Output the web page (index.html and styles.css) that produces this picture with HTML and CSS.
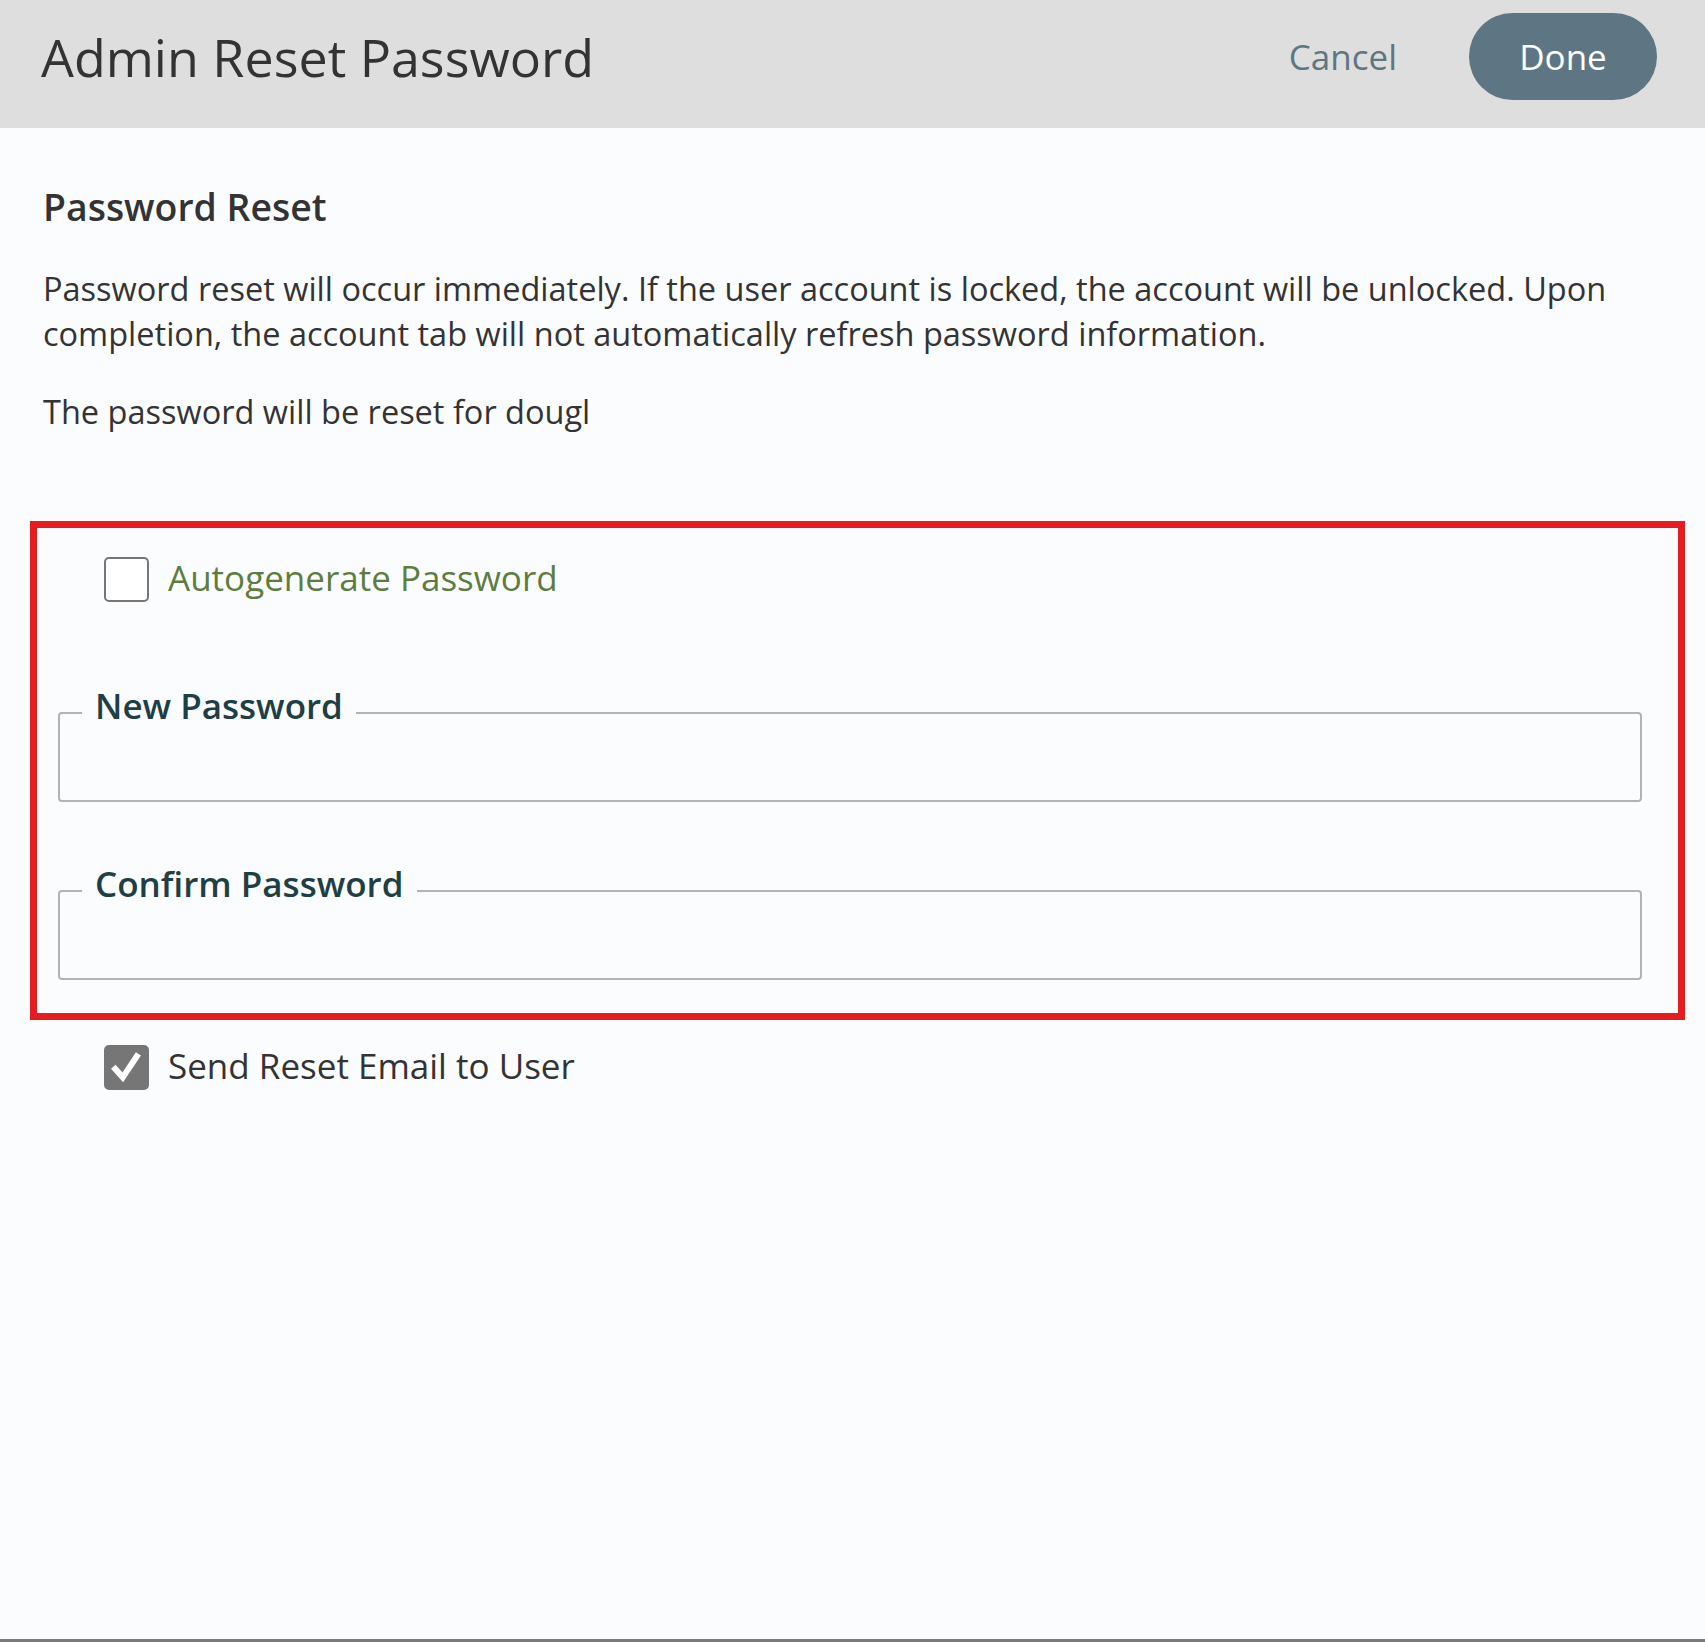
FILE: index.html
```html
<!DOCTYPE html>
<html lang="en">
<head>
<meta charset="utf-8">
<title>Admin Reset Password</title>
<link rel="stylesheet" href="styles.css">
</head>
<body>
<div class="page">
  <header class="topbar">
    <h1 class="title">Admin Reset Password</h1>
    <div class="actions">
      <button class="btn-cancel" type="button">Cancel</button>
      <button class="btn-done" type="button">Done</button>
    </div>
  </header>

  <main class="content">
    <h2 class="section-title">Password Reset</h2>
    <p class="desc">Password reset will occur immediately. If the user account is locked, the account will be unlocked. Upon completion, the account tab will not automatically refresh password information.</p>
    <p class="desc target">The password will be reset for dougl</p>
  </main>

  <section class="highlight">
    <label class="check-row">
      <span class="checkbox"></span>
      <span class="check-label green">Autogenerate Password</span>
    </label>

    <fieldset class="field first">
      <legend>New Password</legend>
      <input class="field-input" type="password" aria-label="New Password">
    </fieldset>

    <fieldset class="field second">
      <legend>Confirm Password</legend>
      <input class="field-input" type="password" aria-label="Confirm Password">
    </fieldset>
  </section>

  <label class="check-row send">
    <span class="checkbox checked">
      <svg viewBox="0 0 44 44" width="44" height="44" aria-hidden="true">
        <path d="M10 23 L18 32 L33 9.5" fill="none" stroke="#ffffff" stroke-width="6.5" stroke-linecap="square" stroke-linejoin="miter"/>
      </svg>
    </span>
    <span class="check-label">Send Reset Email to User</span>
  </label>
</div>
</body>
</html>
```

FILE: styles.css
```css
* {
  box-sizing: border-box;
}

html, body {
  margin: 0;
  padding: 0;
}

body {
  background: #fbfcfe;
  font-family: "Open Sans", "Noto Sans", sans-serif;
  color: #333333;
}

.page {
  min-height: 100vh;
  border-bottom: 3px solid #7a7a7a;
}

/* Header */
.topbar {
  height: 128px;
  background: #dedede;
  display: flex;
  align-items: center;
  justify-content: space-between;
  padding: 0 48px 15px 41px;
}

.title {
  margin: 0;
  font-size: 52px;
  font-weight: 400;
  line-height: normal;
  color: #333333;
}

.actions {
  display: flex;
  align-items: center;
  gap: 72px;
}

.btn-cancel {
  background: transparent;
  border: none;
  padding: 0;
  font-family: inherit;
  font-size: 35px;
  color: #5e7682;
  cursor: pointer;
}

.btn-done {
  width: 188px;
  height: 87px;
  border: none;
  border-radius: 44px;
  background: #5e7684;
  color: #ffffff;
  font-family: inherit;
  font-size: 35px;
  padding: 0;
  cursor: pointer;
}

/* Intro */
.content {
  padding: 0 43px;
}

.section-title {
  margin: 54px 0 0;
  font-size: 37.4px;
  font-weight: 600;
  line-height: 50px;
  color: #333333;
}

.desc {
  margin: 34px 0 0;
  font-size: 32.5px;
  line-height: 45px;
  color: #333333;
}

.desc.target {
  margin-top: 33px;
}

/* Highlighted box */
.highlight {
  margin: 87px 20px 0 30px;
  border: 7px solid #e41d20;
  padding: 29px 0 33px;
}

.check-row {
  display: flex;
  align-items: center;
  gap: 19px;
  padding-left: 67px;
  height: 45px;
}

.checkbox {
  width: 45px;
  height: 45px;
  flex: none;
  border: 2px solid #767676;
  border-radius: 5px;
  background: #ffffff;
  display: flex;
  align-items: center;
  justify-content: center;
}

.checkbox.checked {
  background: #767676;
  border-color: #767676;
}

.checkbox svg {
  display: block;
}

.check-label {
  font-size: 35px;
  line-height: 45px;
  padding-bottom: 4px;
  color: #333333;
}

.check-label.green {
  color: #5d7d3f;
}

.field {
  margin: 0 36px 0 21px;
  border: 2px solid #b3b3b3;
  border-radius: 4px;
  padding: 0 22px;
  min-width: 0;
}

.field.first {
  margin-top: 82px;
}

.field.second {
  margin-top: 60px;
}

.field legend {
  padding: 0 13px 13px;
  font-size: 35px;
  font-weight: 600;
  line-height: 44px;
  color: #1f3f45;
}

.field-input {
  display: block;
  width: 100%;
  height: 59px;
  border: none;
  outline: none;
  background: transparent;
  font-family: inherit;
  font-size: 32px;
  padding: 0;
}

.check-row.send {
  margin-top: 25px;
  padding-left: 104px;
}
```
